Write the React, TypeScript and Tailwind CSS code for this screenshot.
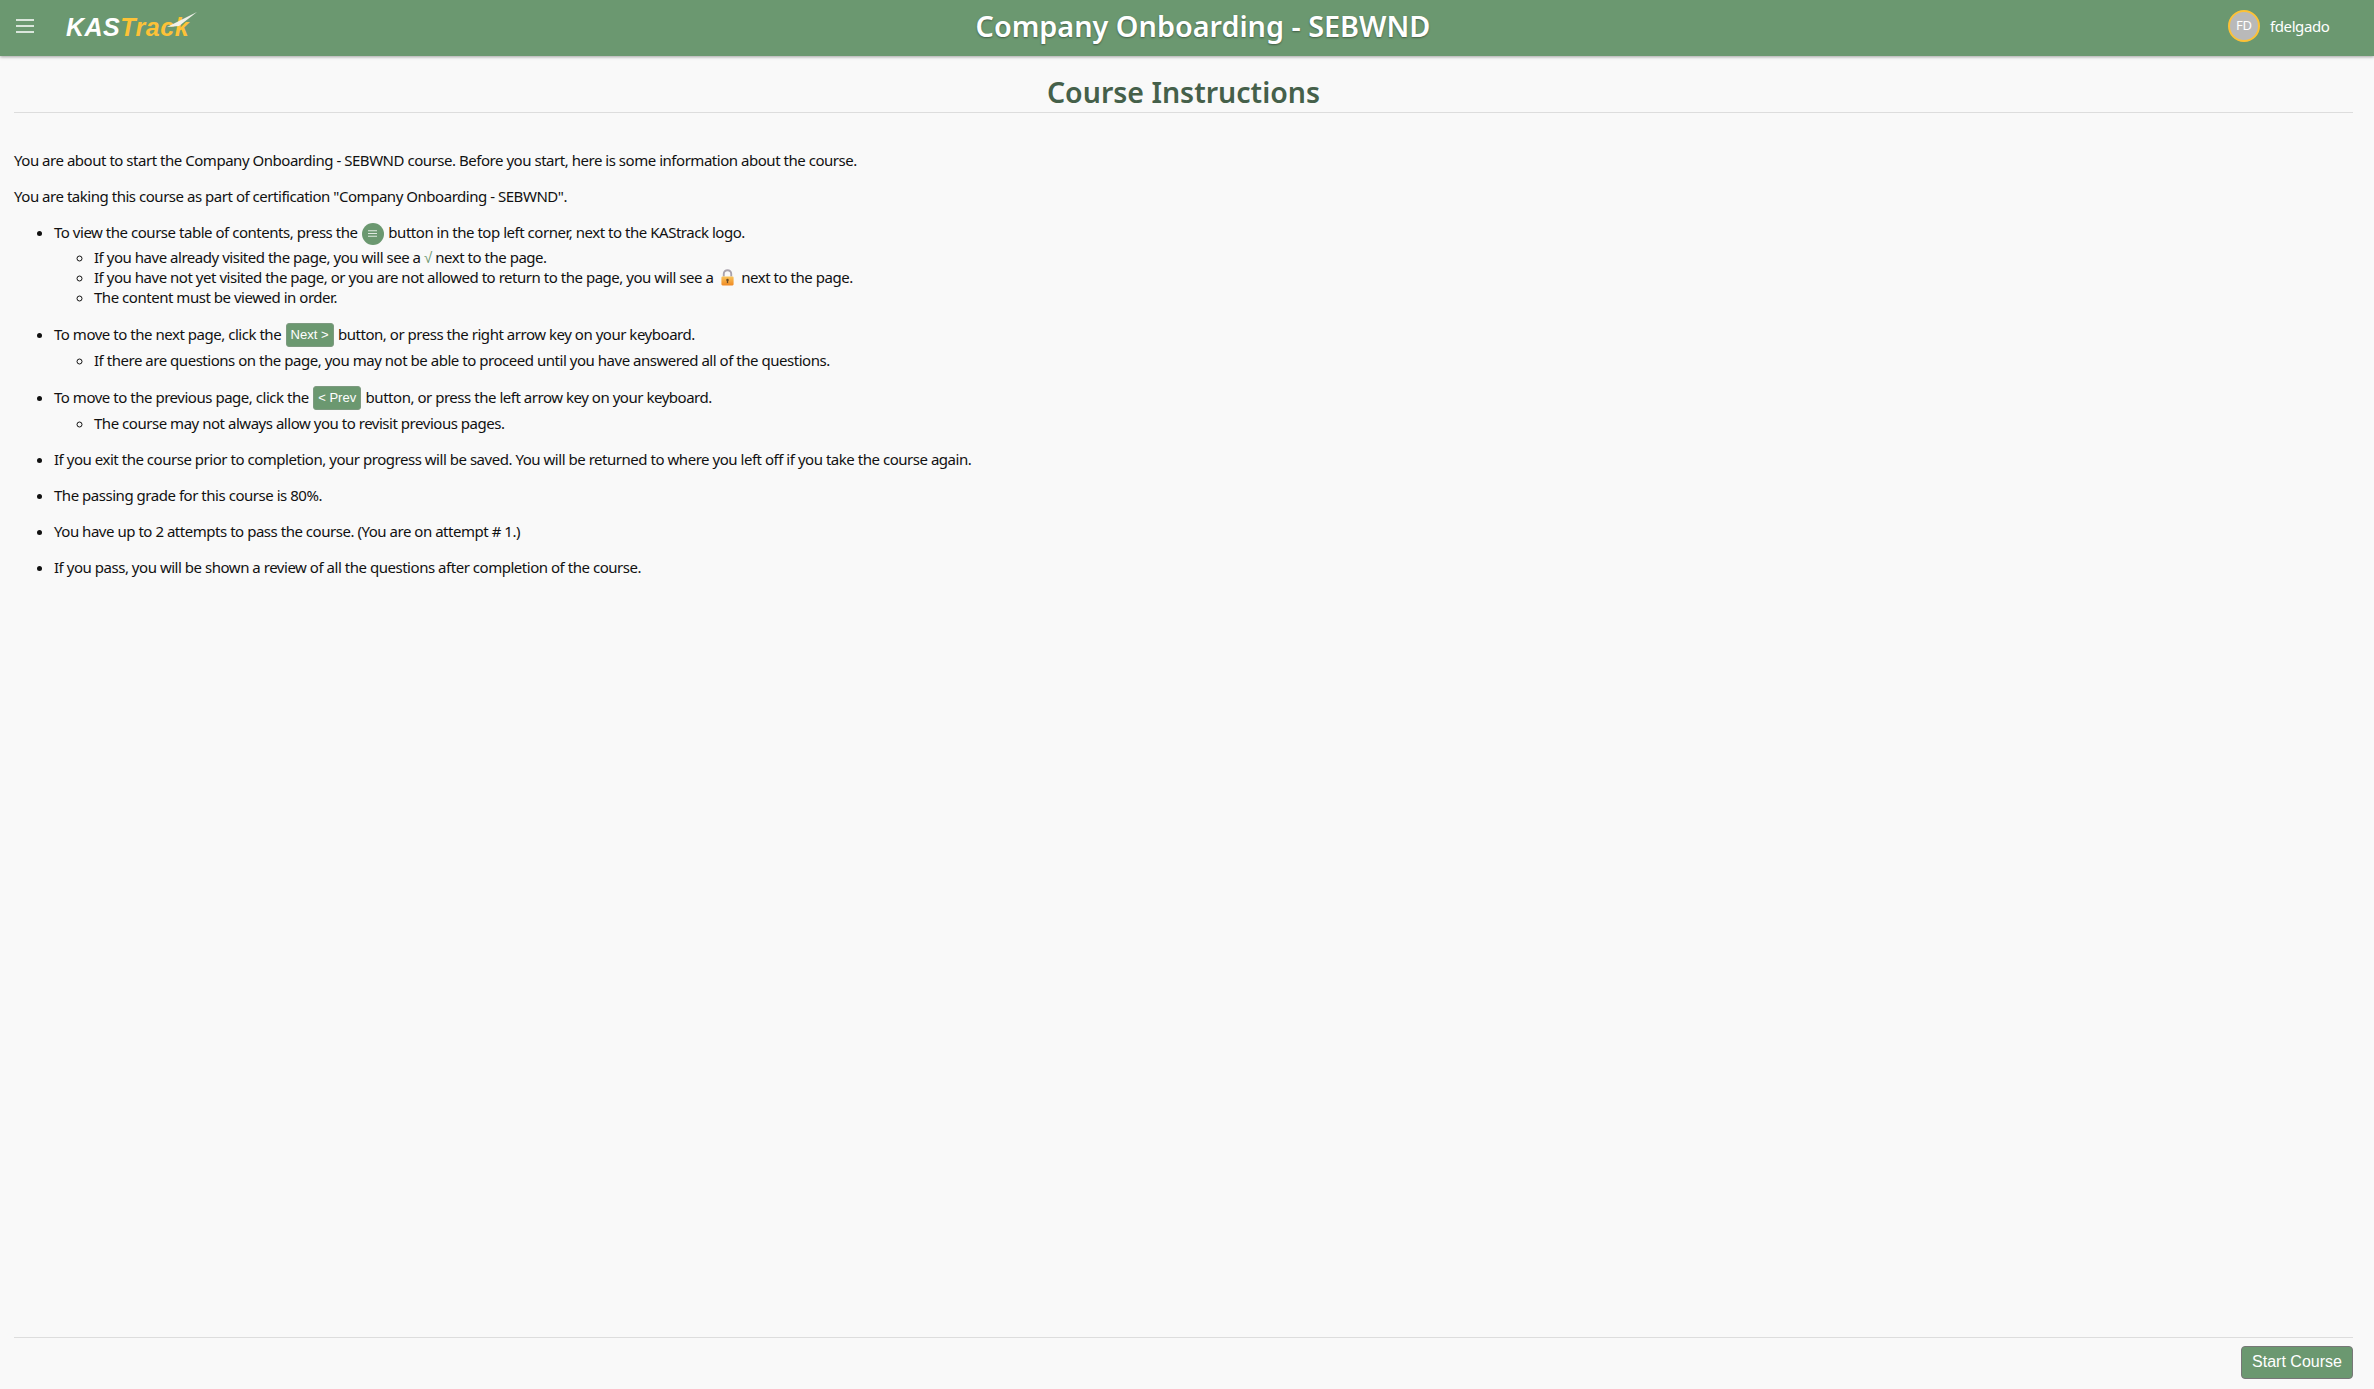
import { ReactNode } from 'react'

const bodyFont = 'font-["Noto_Sans",sans-serif]'

function LockIcon() {
  return (
    <svg viewBox="0 0 16 18" className="inline-block w-[15px] h-[17px] align-[-3px] mx-[3px]">
      <defs>
        <linearGradient id="lockBody" x1="0" y1="0" x2="0" y2="1">
          <stop offset="0" stopColor="#f9c35a" />
          <stop offset="1" stopColor="#f08a24" />
        </linearGradient>
      </defs>
      <path d="M4 8V5.2a4 4 0 0 1 8 0V8" fill="none" stroke="#a9a3ad" strokeWidth="2" />
      <rect x="1.5" y="8" width="13" height="9.5" rx="1.2" fill="url(#lockBody)" />
      <circle cx="8" cy="11.7" r="1.3" fill="#6b4a25" />
      <rect x="7.3" y="12" width="1.4" height="3" fill="#6b4a25" />
    </svg>
  )
}

function MenuDot() {
  return (
    <span className="inline-flex w-[22px] h-[22px] rounded-full bg-[#6b9870] items-center justify-center align-middle mx-[1px] -my-1">
      <svg viewBox="0 0 12 10" className="w-[11px] h-[9px]">
        <path d="M1 2h10M1 5h10M1 8h10" stroke="#dfe9e0" strokeWidth="1.2" />
      </svg>
    </span>
  )
}

function InlineBtn({ children }: { children: ReactNode }) {
  return (
    <span className='inline-block align-[1px] bg-[#6b9870] text-white text-[13px] tracking-normal leading-[22px] h-[24px] px-[4px] mx-[1px] -mb-[2px] rounded-[3px] border border-[#7d9a80] font-["Liberation_Sans",sans-serif]'>
      {children}
    </span>
  )
}

export default function App() {
  return (
    <div className={`min-h-screen flex flex-col bg-[#f9f9f9] text-[#111] ${bodyFont}`}>
      {/* Top bar */}
      <header className="h-[56px] pb-[4px] bg-[#6b9870] shadow-[0_1px_3px_rgba(0,0,0,0.35)] flex items-center shrink-0">
        <div className="w-[232px] flex items-center pl-[16px]">
          <svg viewBox="0 0 18 14" className="w-[18px] h-[14px]">
            <path d="M0 1h18M0 7h18M0 13h18" stroke="#fff" strokeWidth="1.6" />
          </svg>
          <div className='relative ml-[32px] mt-[3px] text-[25px] leading-none font-bold italic tracking-[0.5px] font-["Liberation_Sans",sans-serif]'>
            <span className="text-white">KAS</span>
            <span className="text-[#fdc237]">Track</span>
            <svg viewBox="0 0 30 16" className="absolute right-[-8px] top-[-3px] w-[30px] h-[16px]">
              <path d="M0 15 L30 0 L12 14 Z" fill="#f1f1ea" />
            </svg>
          </div>
        </div>
        <h1 className="flex-1 text-center text-[28.8px] font-semibold text-white [text-shadow:0_1px_2px_rgba(0,0,0,0.4)]">
          Company Onboarding - SEBWND
        </h1>
        <div className="w-[200px] flex items-center pl-[54px]">
          <span className="w-[32px] h-[32px] rounded-full bg-[#b9b9b9] border-2 border-[#fdc237] text-white text-[13px] flex items-center justify-center">
            FD
          </span>
          <span className="ml-[10px] text-white text-[15px] tracking-[-0.4px]">fdelgado</span>
        </div>
      </header>

      {/* Instructions */}
      <main className="flex-1 pl-[14px] pr-[21px]">
        <h2 className="text-center text-[28.5px] leading-[40px] font-semibold text-[#45604a] mt-[16px] border-b border-[#ddd]">
          Course Instructions
        </h2>
        <div className="text-[15px] leading-[20px] tracking-[-0.47px] mt-[37px]">
          <p>You are about to start the Company Onboarding - SEBWND course. Before you start, here is some information about the course.</p>
          <p className="mt-[16px]">You are taking this course as part of certification "Company Onboarding - SEBWND".</p>
          <ul className="list-disc pl-[40px] mt-[16px] space-y-[16px]">
            <li>
              To view the course table of contents, press the <MenuDot /> button in the top left corner, next to the KAStrack logo.
              <ul className="list-[circle] pl-[40px] mt-[5px]">
                <li>If you have already visited the page, you will see a <span className="text-[#6b9870]">√</span> next to the page.</li>
                <li>If you have not yet visited the page, or you are not allowed to return to the page, you will see a <LockIcon /> next to the page.</li>
                <li>The content must be viewed in order.</li>
              </ul>
            </li>
            <li>
              To move to the next page, click the <InlineBtn>Next &gt;</InlineBtn> button, or press the right arrow key on your keyboard.
              <ul className="list-[circle] pl-[40px] mt-[5px]">
                <li>If there are questions on the page, you may not be able to proceed until you have answered all of the questions.</li>
              </ul>
            </li>
            <li>
              To move to the previous page, click the <InlineBtn>&lt; Prev</InlineBtn> button, or press the left arrow key on your keyboard.
              <ul className="list-[circle] pl-[40px] mt-[5px]">
                <li>The course may not always allow you to revisit previous pages.</li>
              </ul>
            </li>
            <li>If you exit the course prior to completion, your progress will be saved. You will be returned to where you left off if you take the course again.</li>
            <li>The passing grade for this course is 80%.</li>
            <li>You have up to 2 attempts to pass the course. (You are on attempt # 1.)</li>
            <li>If you pass, you will be shown a review of all the questions after completion of the course.</li>
          </ul>
        </div>
      </main>

      {/* Footer */}
      <footer className="ml-[14px] mr-[21px] border-t border-[#ddd] h-[52px] pt-[8px] flex justify-end shrink-0">
        <button className='h-[33px] w-[112px] pb-[2px] rounded-[4px] bg-[#6b9870] border border-[#777] text-white text-[16px] font-["Liberation_Sans",sans-serif]'>
          Start Course
        </button>
      </footer>
    </div>
  )
}
